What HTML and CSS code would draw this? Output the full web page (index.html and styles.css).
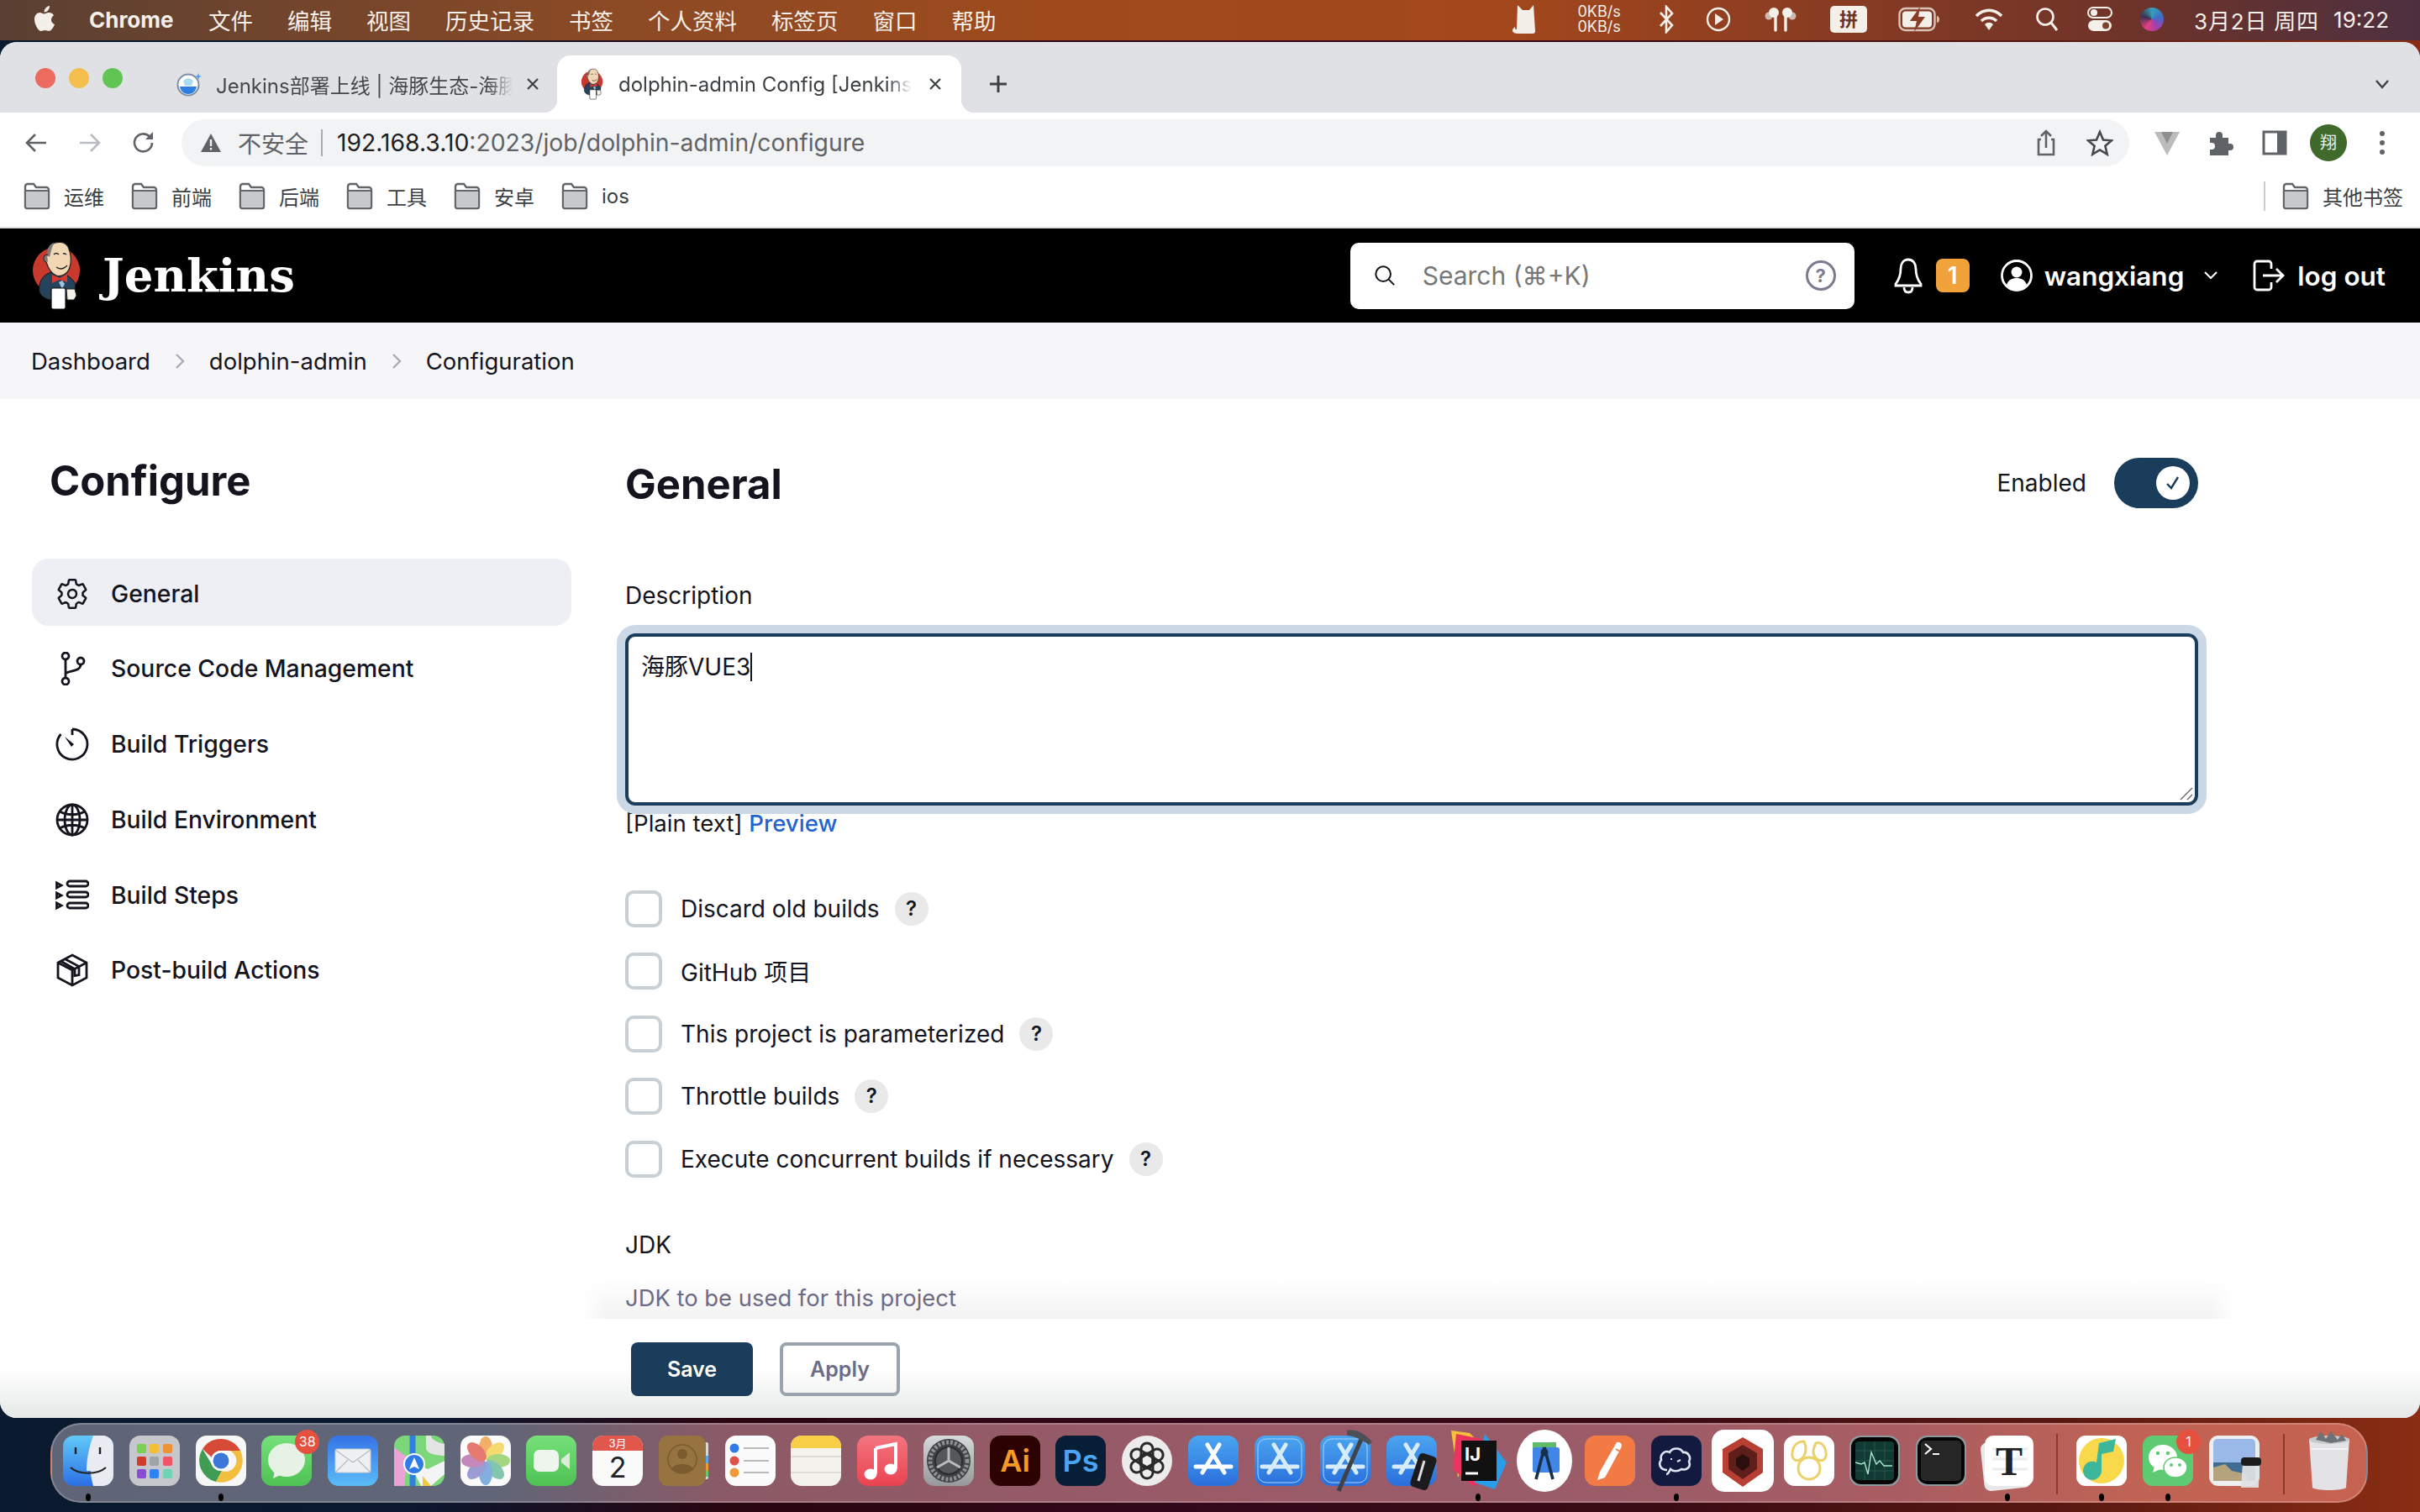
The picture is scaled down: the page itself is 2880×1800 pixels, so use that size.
FILE: index.html
```html
<!DOCTYPE html>
<html lang="zh-CN">
<head>
    <meta charset="UTF-8">
    <title>dolphin-admin Config [Jenkins]</title>
    <link rel="stylesheet" href="styles.css">
</head>
<body>
    <!-- shared bits -->
    <svg class="defs" width="0" height="0">
        <defs>
            <symbol id="jenkins" viewBox="0 0 62 84">
                <circle cx="30" cy="36" r="28" fill="#c93a2e"/>
                <path d="M10 62C8 48 16 38 28 38c12 0 20 6 25 14l-2 18H40c-12 3-25 2-30-8z" fill="#27435c" stroke="#111" stroke-width="1"/>
                <path d="M22 8C26 1 40 0 44 8c4 8 4 18 2 24-2 8-10 12-16 10-6-2-10-10-12-16-4-2-4-10 2-8z" fill="#f2d7b5" stroke="#222" stroke-width="1.2"/>
                <path d="M20 18c-2-8 2-14 8-15-4 5-4 11-6 17zM16 24c-1-3 0-6 3-6l1 8z" fill="#7b7b7b"/>
                <path d="M27 17c2-2 4-2 6 0M38 16c2-1 3 0 4 1M30 32c4 3 9 2 13-2" fill="none" stroke="#222" stroke-width="1.4"/>
                <path d="M25 41l9 4 9-5v10l-9-3-9 4z" fill="#d8382e"/>
                <path d="M33 50l4-2 3 4-3 6z" fill="#9fc3dd"/>
                <rect x="24" y="57" width="17" height="25" rx="2" fill="#fff" stroke="#111" stroke-width="1.2"/>
                <path d="M42 58h10l2 8-3 5h-8z" fill="#f4f1ea" stroke="#222"/>
            </symbol>
            <symbol id="folder" viewBox="0 0 32 34">
                <path d="M2 6a3 3 0 0 1 3-3h7l3 4h12a3 3 0 0 1 3 3v20a2 2 0 0 1-2 2H4a2 2 0 0 1-2-2z" fill="#fff" stroke="#62656a" stroke-width="2.4"/>
                <path d="M3 12h26v18H3z" fill="#c8c9cb"/>
                <path d="M2 11h28" stroke="#62656a" stroke-width="2"/>
            </symbol>
            <symbol id="close" viewBox="0 0 16 16">
                <path d="M2 2l12 12M14 2L2 14" stroke="#3c4043" stroke-width="2.2" fill="none"/>
            </symbol>
            <symbol id="store-a" viewBox="0 0 60 60">
                <path d="M23 11l20 33M37 11L17 44M9 37h42" fill="none" stroke="currentColor" stroke-width="5" stroke-linecap="round"/>
            </symbol>
            <linearGradient id="g-blue" x1="0" y1="0" x2="0" y2="1"><stop offset="0" stop-color="#4aa5f0"/><stop offset="1" stop-color="#2a6fdc"/></linearGradient>
            <linearGradient id="g-green" x1="0" y1="0" x2="0" y2="1"><stop offset="0" stop-color="#76e07a"/><stop offset="1" stop-color="#4fc254"/></linearGradient>
            <linearGradient id="g-mail" x1="0" y1="0" x2="0" y2="1"><stop offset="0" stop-color="#3573e6"/><stop offset="1" stop-color="#5bbcf8"/></linearGradient>
            <linearGradient id="g-red" x1="0" y1="0" x2="0" y2="1"><stop offset="0" stop-color="#f2757f"/><stop offset="1" stop-color="#ea4350"/></linearGradient>
            <linearGradient id="g-gray" x1="0" y1="0" x2="0" y2="1"><stop offset="0" stop-color="#d6dadb"/><stop offset="1" stop-color="#96989a"/></linearGradient>
            <linearGradient id="g-finder" x1="0" y1="0" x2="0" y2="1"><stop offset="0" stop-color="#62c9f8"/><stop offset="1" stop-color="#2b70e6"/></linearGradient>
        </defs>
    </svg>

    <header class="menubar">
        <svg class="apple" viewBox="0 0 26 32"><path d="M21 17c0-4 3-5.500 3-6-2-3-5-3-6-3-2.500 0-4 1.500-5.500 1.500S9.500 8 7.500 8C4 8 1 11 1 16c0 6 4.500 14 8 14 1.500 0 2.500-1 4.500-1s3 1 4.500 1c3 0 6-5 7-8-2-1-4-2.500-4-5zM17 5.500C18.500 4 19 2 19 0c-2 .2-4 1.500-5 3-1 1-1.500 3-1.500 4.500 2 0 3.500-1 4.500-2z" fill="#f5efe9"/></svg>
        <span class="app-name">Chrome</span>
        <nav class="menu-list">
            <span>文件</span><span>编辑</span><span>视图</span><span>历史记录</span><span>书签</span><span>个人资料</span><span>标签页</span><span>窗口</span><span>帮助</span>
        </nav>
        <div class="status">
            <svg class="st-cat" viewBox="0 0 34 36"><path d="M7 1l6 6h8l5-6 2 31c0 2-1 3-3 3H8c-4 0-7-1-7-4 0-2 2-3 3-4 0 3 1 3 2 3z" fill="#f5efe9"/></svg>
            <span class="net">0KB/s<br>0KB/s</span>
            <svg class="st-icon" width="20" height="34" viewBox="0 0 20 34"><path d="M3 9l14 15-7 8V2l7 8L3 25" fill="none" stroke="#f5efe9" stroke-width="2.600"/></svg>
            <svg class="st-icon" width="30" height="30" viewBox="0 0 30 30"><circle cx="15" cy="15" r="13" fill="none" stroke="#f5efe9" stroke-width="2.400"/><path d="M11 8l10 7-10 7z" fill="#f5efe9"/></svg>
            <svg class="st-icon" width="40" height="30" viewBox="0 0 40 30"><circle cx="6" cy="11" r="4.500" fill="#cdb9ae"/><circle cx="34" cy="11" r="4.500" fill="#cdb9ae"/><path d="M14 8v20M26 8v20" stroke="#f5efe9" stroke-width="3.400" stroke-linecap="round"/><circle cx="12" cy="7" r="6" fill="#f5efe9"/><circle cx="28" cy="7" r="6" fill="#f5efe9"/></svg>
            <span class="st-pin">拼</span>
            <svg class="st-icon" width="50" height="30" viewBox="0 0 50 30"><rect x="1.500" y="2" width="42" height="26" rx="7" fill="none" stroke="#d9c3b9" stroke-width="2.400"/><rect x="5" y="5.500" width="35" height="19" rx="4" fill="#f5efe9"/><path d="M26 0L14 17h8l-3 13 13-18h-8z" fill="#8a3d26"/><path d="M46 11v8c2 0 3-2 3-4s-1-4-3-4z" fill="#d9c3b9"/></svg>
            <svg class="st-icon" width="36" height="30" viewBox="0 0 36 30"><path d="M3 11c9-9 21-9 30 0M9 17c5-5 13-5 18 0" fill="none" stroke="#f5efe9" stroke-width="3.600"/><path d="M13 21c3-3 7-3 10 0l-5 7z" fill="#f5efe9"/></svg>
            <svg class="st-icon" width="28" height="30" viewBox="0 0 28 30"><circle cx="12" cy="12" r="9.500" fill="none" stroke="#f5efe9" stroke-width="2.600"/><path d="M19 19l7 9" stroke="#f5efe9" stroke-width="3"/></svg>
            <svg class="st-icon" width="30" height="30" viewBox="0 0 30 30"><rect x="1" y="1" width="28" height="12" rx="6" fill="none" stroke="#f5efe9" stroke-width="2"/><circle cx="8" cy="7" r="4" fill="#f5efe9"/><rect x="1" y="16" width="28" height="13" rx="6.500" fill="#f5efe9"/><circle cx="22" cy="22.500" r="4" fill="#7b4230"/></svg>
            <span class="st-siri"></span>
            <span class="clock">3月2日 周四</span>
            <span class="clock clock-time">19:22</span>
        </div>
    </header>

    <div class="window">
        <div class="tabstrip">
            <div class="lights"><i class="red"></i><i class="yellow"></i><i class="green"></i></div>
            <div class="tab">
                <svg class="favicon" viewBox="0 0 30 30"><circle cx="14" cy="16" r="12.500" fill="#fff" stroke="#7d8ea8" stroke-width="2"/><path d="M4 18h20c-1 6-5 9-10 9S5 24 4 18z" fill="#2f7fe0"/><path d="M8 12c2-5 10-5 12 0l-2 5H10z" fill="#a9dcf1"/><path d="M26 2l1 3 3 1-3 1-1 3-1-3-3-1 3-1z" fill="#4f9cf0"/></svg>
                <span class="tab-title">Jenkins部署上线 | 海豚生态-海豚生态官方文档</span>
                <svg class="tab-close"><use href="#close"/></svg>
            </div>
            <div class="tab active">
                <svg class="favicon"><use href="#jenkins"/></svg>
                <span class="tab-title">dolphin-admin Config [Jenkins]</span>
                <svg class="tab-close"><use href="#close"/></svg>
            </div>
            <svg class="tab-plus" viewBox="0 0 22 22"><path d="M11 1v20M1 11h20" stroke="#3c4043" stroke-width="3"/></svg>
            <svg class="tab-more" viewBox="0 0 18 12"><path d="M2 2l7 8 7-8" fill="none" stroke="#3c4043" stroke-width="2.400"/></svg>
        </div>

        <div class="toolbar">
            <svg class="nav-btn" viewBox="0 0 28 28"><path d="M26 14H4M13 4L3 14l10 10" fill="none" stroke="#5f6368" stroke-width="2.600"/></svg>
            <svg class="nav-btn" viewBox="0 0 28 28"><path d="M2 14h22M15 4l10 10-10 10" fill="none" stroke="#b9bcc0" stroke-width="2.600"/></svg>
            <svg class="nav-btn" viewBox="0 0 28 28"><path d="M24 14a10.500 10.500 0 1 1-3-7.500" fill="none" stroke="#5f6368" stroke-width="2.600"/><path d="M25 1v9h-9z" fill="#5f6368"/></svg>
            <div class="omnibox">
                <svg class="warn" viewBox="0 0 26 26"><path d="M13 2l12 22H1z" fill="#5f6368"/><path d="M13 9v8M13 19v2.500" stroke="#f1f3f4" stroke-width="2.400"/></svg>
                <span class="insecure">不安全</span>
                <span class="omni-sep"></span>
                <span class="url"><b>192.168.3.10</b>:2023/job/dolphin-admin/configure</span>
                <div class="omni-actions">
                    <svg viewBox="0 0 32 32"><path d="M10 12H7v18h18V12h-3M16 22V3M10 8l6-6 6 6" fill="none" stroke="#5f6368" stroke-width="2.600"/></svg>
                    <svg viewBox="0 0 32 32"><path d="M16 3l4 9.500 10 .8-7.600 6.500 2.300 9.900L16 24.500l-8.700 5.200 2.300-9.900L2 13.300l10-.8z" fill="none" stroke="#45484c" stroke-width="2.600"/></svg>
                </div>
            </div>
            <div class="extensions">
                <svg viewBox="0 0 32 32"><path d="M1 3h30L16 31z" fill="#bcbcbc"/><path d="M9 3h14l-7 14z" fill="#8f8f8f"/></svg>
                <svg viewBox="0 0 32 32"><path d="M3 10h7V7a4 4 0 0 1 8 0v3h7v7h2a4 4 0 0 1 0 8h-2v6H3v-7h2a4 4 0 0 0 0-8H3z" fill="#5f6368"/></svg>
                <svg viewBox="0 0 32 32"><rect x="3" y="3" width="26" height="26" fill="none" stroke="#5f6368" stroke-width="3"/><rect x="19" y="3" width="10" height="26" fill="#5f6368"/></svg>
                <span class="avatar">翔</span>
                <svg viewBox="0 0 32 32"><circle cx="16" cy="5" r="3" fill="#5f6368"/><circle cx="16" cy="16" r="3" fill="#5f6368"/><circle cx="16" cy="27" r="3" fill="#5f6368"/></svg>
            </div>
        </div>

        <div class="bookmarks">
            <a class="bookmark"><svg><use href="#folder"/></svg>运维</a>
            <a class="bookmark"><svg><use href="#folder"/></svg>前端</a>
            <a class="bookmark"><svg><use href="#folder"/></svg>后端</a>
            <a class="bookmark"><svg><use href="#folder"/></svg>工具</a>
            <a class="bookmark"><svg><use href="#folder"/></svg>安卓</a>
            <a class="bookmark"><svg><use href="#folder"/></svg>ios</a>
            <div class="other-bookmarks"><a class="bookmark"><svg><use href="#folder"/></svg>其他书签</a></div>
        </div>

        <header class="jenkins-header">
            <svg class="logo"><use href="#jenkins"/></svg>
            <span class="wordmark">Jenkins</span>
            <div class="search">
                <svg class="search-icon" viewBox="0 0 28 28"><circle cx="12" cy="12" r="9.500" fill="none" stroke="#14141f" stroke-width="2.200"/><path d="M19 19l7 7" stroke="#14141f" stroke-width="2.200"/></svg>
                <span class="search-text">Search (⌘+K)</span>
                <span class="search-help">?</span>
            </div>
            <svg class="bell" viewBox="0 0 36 44"><path d="M18 3c-6 0-9 5-9 11 0 8-2 13-6 18v2h30v-2c-4-5-6-10-6-18 0-6-3-11-9-11z" fill="none" stroke="#fff" stroke-width="2.800"/><path d="M13 36c0 4 2 6 5 6s5-2 5-6" fill="none" stroke="#fff" stroke-width="2.800"/></svg>
            <span class="badge">1</span>
            <svg class="user-icon" viewBox="0 0 38 38"><circle cx="19" cy="19" r="17.500" fill="none" stroke="#fff" stroke-width="2.800"/><circle cx="19" cy="15" r="6.500" fill="#fff"/><path d="M7 30c2-6 7-8 12-8s10 2 12 8c-3 4-7 6-12 6s-9-2-12-6z" fill="#fff"/></svg>
            <span class="user-name">wangxiang</span>
            <svg class="user-caret" viewBox="0 0 16 10"><path d="M1 1l7 7 7-7" fill="none" stroke="#fff" stroke-width="2.200"/></svg>
            <svg class="logout-icon" viewBox="0 0 38 38"><path d="M22 11V5a3 3 0 0 0-3-3H5a3 3 0 0 0-3 3v28a3 3 0 0 0 3 3h14a3 3 0 0 0 3-3v-6M12 19h24M28 11l8 8-8 8" fill="none" stroke="#fff" stroke-width="2.800"/></svg>
            <span class="logout">log out</span>
        </header>

        <nav class="breadcrumbs">
            <a>Dashboard</a>
            <svg viewBox="0 0 12 20"><path d="M2 2l8 8-8 8" fill="none" stroke="#a9a9b8" stroke-width="2.400"/></svg>
            <a>dolphin-admin</a>
            <svg viewBox="0 0 12 20"><path d="M2 2l8 8-8 8" fill="none" stroke="#a9a9b8" stroke-width="2.400"/></svg>
            <a>Configuration</a>
        </nav>

        <div class="config">
            <aside class="sidebar">
                <h1>Configure</h1>
                <ul class="side-nav">
                    <li class="selected">
                        <svg viewBox="0 0 512 512"><path class="line-big" d="M262.290 192.310a64 64 0 1 0 57.400 57.400 64.130 64.130 0 0 0-57.400-57.400zM416.390 256a154.340 154.340 0 0 1-1.530 20.790l45.210 35.460a10.810 10.810 0 0 1 2.450 13.750l-42.770 74a10.810 10.810 0 0 1-13.140 4.590l-44.900-18.080a16.110 16.110 0 0 0-15.170 1.750A164.480 164.480 0 0 1 325 400.800a15.940 15.940 0 0 0-8.820 12.140l-6.730 47.890a11.080 11.080 0 0 1-10.680 9.170h-85.540a11.110 11.110 0 0 1-10.690-8.870l-6.720-47.820a16.070 16.070 0 0 0-9-12.220 155.300 155.300 0 0 1-21.460-12.570 16 16 0 0 0-15.110-1.710l-44.890 18.070a10.810 10.810 0 0 1-13.140-4.580l-42.770-74a10.800 10.800 0 0 1 2.450-13.750l38.210-30a16.050 16.050 0 0 0 6-14.080c-.36-4.170-.58-8.330-.58-12.500s.21-8.270.58-12.350a16 16 0 0 0-6.070-13.940l-38.190-30A10.810 10.810 0 0 1 49.480 186l42.770-74a10.810 10.810 0 0 1 13.140-4.590l44.900 18.080a16.110 16.110 0 0 0 15.170-1.750A164.480 164.480 0 0 1 187 111.200a15.940 15.940 0 0 0 8.820-12.140l6.730-47.890A11.080 11.080 0 0 1 213.230 42h85.540a11.110 11.110 0 0 1 10.690 8.870l6.720 47.820a16.070 16.070 0 0 0 9 12.220 155.300 155.300 0 0 1 21.460 12.570 16 16 0 0 0 15.110 1.710l44.890-18.070a10.810 10.810 0 0 1 13.140 4.580l42.770 74a10.800 10.800 0 0 1-2.450 13.750l-38.210 30a16.050 16.050 0 0 0-6.050 14.080c.33 4.140.55 8.300.55 12.470z"/></svg>
                        General
                    </li>
                    <li>
                        <svg viewBox="0 0 40 40"><g class="line"><circle cx="12" cy="5" r="4"/><circle cx="30" cy="11" r="4"/><circle cx="12" cy="35" r="4"/><path d="M12 9v22M12 26c3-4 18-2 18-11"/></g></svg>
                        Source Code Management
                    </li>
                    <li>
                        <svg viewBox="0 0 40 40"><g class="line"><path d="M20 2a18 18 0 1 1-13.500 6M20 2v7"/></g><path d="M11 11l11 9-3 3z" class="solid"/></svg>
                        Build Triggers
                    </li>
                    <li>
                        <svg viewBox="0 0 40 40"><g class="line"><circle cx="20" cy="20" r="18"/><ellipse cx="20" cy="20" rx="9" ry="18"/><path d="M20 2v36M2 20h36M5 10c9 5 21 5 30 0M5 30c9-5 21-5 30 0"/></g></svg>
                        Build Environment
                    </li>
                    <li>
                        <svg viewBox="0 0 40 40"><g class="line"><path d="M1.500 5l5.500 3-5.500 3zM1.500 17l5.500 3-5.500 3zM1.500 29l5.500 3-5.500 3z"/><rect x="14" y="3" width="25" height="6" rx="3"/><rect x="14" y="16" width="25" height="6" rx="3"/><rect x="14" y="29" width="25" height="6" rx="3"/></g></svg>
                        Build Steps
                    </li>
                    <li>
                        <svg viewBox="0 0 40 40"><g class="line"><path d="M20 2l17 9v18l-17 9-17-9V11zM3 11l17 9 17-9M20 20v18M11 6.500l17 9v10l-5 1v-8L6 9"/></g></svg>
                        Post-build Actions
                    </li>
                </ul>
            </aside>

            <main class="main">
                <div class="main-body">
                    <div class="section-head">
                        <h2>General</h2>
                        <div class="enabled">
                            <span>Enabled</span>
                            <span class="toggle">
                                <span class="knob"><svg viewBox="0 0 20 20"><path d="M3 11l5 5L16 3" fill="none" stroke="#1b3d5c" stroke-width="2.400"/></svg></span>
                            </span>
                        </div>
                    </div>

                    <div class="field-label desc-label">Description</div>
                    <div class="desc-box">
                        <span>海豚VUE3</span><i class="caret"></i>
                        <svg class="grip" viewBox="0 0 16 16"><path d="M1 15L15 1M9 15l6-6" stroke="#666" stroke-width="1.400"/></svg>
                    </div>
                    <div class="desc-foot">[Plain text] <a>Preview</a></div>

                    <div class="checks">
                        <label class="check"><i class="box"></i>Discard old builds<span class="help">?</span></label>
                        <label class="check"><i class="box"></i>GitHub 项目</label>
                        <label class="check"><i class="box"></i>This project is parameterized<span class="help">?</span></label>
                        <label class="check"><i class="box"></i>Throttle builds<span class="help">?</span></label>
                        <label class="check"><i class="box"></i>Execute concurrent builds if necessary<span class="help">?</span></label>
                    </div>

                    <div class="field-label jdk-label">JDK</div>
                    <div class="jdk-desc">JDK to be used for this project</div>
                </div>

                <div class="bottom-bar">
                    <button class="btn-save">Save</button>
                    <button class="btn-apply">Apply</button>
                </div>
            </main>
        </div>
    </div>

    <footer class="dock">
        <div class="dock-item on"><svg viewBox="0 0 60 60"><rect width="60" height="60" rx="13" fill="url(#g-finder)"/><path d="M36 0h11a13 13 0 0 1 13 13v34a13 13 0 0 1-13 13H36c-2-8-3-12-3-18h-5c0-14 3-28 8-42z" fill="#e9edf3"/><path d="M15 14v8M44 14v8" stroke="#222" stroke-width="2.400"/><path d="M9 38c10 9 32 9 42 0" fill="none" stroke="#222" stroke-width="2"/></svg></div>
        <div class="dock-item"><svg viewBox="0 0 60 60"><rect width="60" height="60" rx="13" fill="#c5c7cc"/><rect x="9" y="10" width="11" height="11" rx="2" fill="#7bd14f"/><rect x="24" y="10" width="11" height="11" rx="2" fill="#f4bf36"/><rect x="40" y="10" width="11" height="11" rx="2" fill="#ec9433"/><rect x="9" y="25" width="11" height="11" rx="2" fill="#d23b2c"/><rect x="24" y="25" width="11" height="11" rx="2" fill="#9fa4a8"/><rect x="40" y="25" width="11" height="11" rx="2" fill="#ef5565"/><rect x="9" y="40" width="11" height="11" rx="2" fill="#8a4bd4"/><rect x="24" y="40" width="11" height="11" rx="2" fill="#2f83f0"/><rect x="40" y="40" width="11" height="11" rx="2" fill="#6fd4b4"/></svg></div>
        <div class="dock-item on"><svg viewBox="0 0 60 60"><rect width="60" height="60" rx="13" fill="#f7f7f7"/><path d="M30 4a26 26 0 0 1 23 14H30a12 12 0 0 0-11 8L8 16A26 26 0 0 1 30 4z" fill="#d84a38"/><path d="M8 16l12 20a12 12 0 0 0 11 6L24 55A26 26 0 0 1 8 16z" fill="#3f9c52"/><path d="M53 18a26 26 0 0 1-29 37l7-13a12 12 0 0 0 9-24z" fill="#f1bf3d"/><circle cx="30" cy="30" r="12" fill="#fff"/><circle cx="30" cy="30" r="9.500" fill="#3b78d8"/></svg></div>
        <div class="dock-item"><svg viewBox="0 0 60 60"><rect width="60" height="60" rx="13" fill="url(#g-green)"/><ellipse cx="30" cy="29" rx="22" ry="20" fill="#e6f3e4"/><path d="M16 42l-2 9 11-5z" fill="#e6f3e4"/></svg><span class="dock-badge">38</span></div>
        <div class="dock-item"><svg viewBox="0 0 60 60"><rect width="60" height="60" rx="13" fill="url(#g-mail)"/><rect x="9" y="16" width="42" height="28" rx="2" fill="#eef0f2" stroke="#c8ccd2"/><path d="M9 17l21 15 21-15M9 44l15-15M51 44L36 29" fill="none" stroke="#b9bdc4" stroke-width="1.400"/></svg></div>
        <div class="dock-item"><svg viewBox="0 0 60 60"><rect width="60" height="60" rx="13" fill="#7bd77a"/><path d="M0 14l16 12-4 34H0z" fill="#e9a3d6"/><path d="M38 0v14c0 6 6 9 22 10V10C50 8 44 4 44 0z" fill="#e4e4e4"/><path d="M32 60L16 28 40 40l20-10v16L44 60z" fill="#f4f4f4"/><path d="M34 48l10 12H34z" fill="#f2c83c"/><path d="M22 0v60" stroke="#2f7be8" stroke-width="7" opacity=".95"/><circle cx="24" cy="34" r="12" fill="#2f7be8" stroke="#fff" stroke-width="2"/><path d="M24 26l6 14-6-3-6 3z" fill="#fff"/></svg></div>
        <div class="dock-item"><svg viewBox="0 0 60 60"><rect width="60" height="60" rx="13" fill="#fbfbfb"/><g opacity=".78" transform="translate(30 30)"><ellipse cy="-15" rx="8" ry="14" fill="#f09a3e"/><ellipse cy="-15" rx="8" ry="14" fill="#f4d24a" transform="rotate(45)"/><ellipse cy="-15" rx="8" ry="14" fill="#8ccb5e" transform="rotate(90)"/><ellipse cy="-15" rx="8" ry="14" fill="#61b89a" transform="rotate(135)"/><ellipse cy="-15" rx="8" ry="14" fill="#5f9ad8" transform="rotate(180)"/><ellipse cy="-15" rx="8" ry="14" fill="#8083c8" transform="rotate(225)"/><ellipse cy="-15" rx="8" ry="14" fill="#b56aa8" transform="rotate(270)"/><ellipse cy="-15" rx="8" ry="14" fill="#e0574c" transform="rotate(315)"/></g></svg></div>
        <div class="dock-item"><svg viewBox="0 0 60 60"><rect width="60" height="60" rx="13" fill="url(#g-green)"/><rect x="9" y="17" width="30" height="26" rx="7" fill="#eef5ec"/><path d="M42 28l10-8v20l-10-8z" fill="#dcebd8"/></svg></div>
        <div class="dock-item"><svg viewBox="0 0 60 60"><rect width="60" height="60" rx="13" fill="#fafafa"/><path d="M0 18V13A13 13 0 0 1 13 0h34a13 13 0 0 1 13 13v5z" fill="#e2574c"/><text x="30" y="14" class="cal-month">3月</text><text x="30" y="50" class="cal-day">2</text></svg></div>
        <div class="dock-item"><svg viewBox="0 0 60 60"><rect x="50" y="8" width="9" height="44" rx="2" fill="#d8d8d8"/><rect x="54" y="24" width="5" height="9" fill="#58a8e8"/><rect x="54" y="33" width="5" height="9" fill="#ef9a36"/><rect x="54" y="42" width="5" height="7" fill="#67c667"/><rect width="56" height="60" rx="11" fill="#96733f"/><circle cx="28" cy="28" r="17" fill="none" stroke="#7b5c31" stroke-width="1.600"/><circle cx="28" cy="22" r="6" fill="#7b5c31"/><path d="M15 40c3-8 23-8 26 0-6 6-20 6-26 0z" fill="#7b5c31"/></svg></div>
        <div class="dock-item"><svg viewBox="0 0 60 60"><rect width="60" height="60" rx="13" fill="#fbfbfb"/><circle cx="11" cy="15" r="5.500" fill="#2f7be8"/><circle cx="11" cy="30" r="5.500" fill="#e2504c"/><circle cx="11" cy="44" r="5.500" fill="#ef9a36"/><path d="M22 15h30M22 30h30M22 44h30" stroke="#bbb" stroke-width="2"/></svg></div>
        <div class="dock-item"><svg viewBox="0 0 60 60"><rect width="60" height="60" rx="13" fill="#f4f2ec"/><path d="M0 15V13A13 13 0 0 1 13 0h34a13 13 0 0 1 13 13v2z" fill="#f7ce46"/><path d="M0 25h60M0 44h60" stroke="#dddbd5" stroke-width="2"/></svg></div>
        <div class="dock-item"><svg viewBox="0 0 60 60"><rect width="60" height="60" rx="13" fill="url(#g-red)"/><path d="M22 15l24-5v29" fill="none" stroke="#fff" stroke-width="4"/><path d="M22 15v30" stroke="#fff" stroke-width="4"/><ellipse cx="16" cy="46" rx="7.500" ry="6.500" fill="#fff"/><ellipse cx="40" cy="40" rx="7.500" ry="6.500" fill="#fff"/></svg></div>
        <div class="dock-item"><svg viewBox="0 0 60 60"><rect width="60" height="60" rx="13" fill="url(#g-gray)"/><circle cx="30" cy="30" r="26" fill="#3f4143"/><circle cx="30" cy="30" r="22" fill="none" stroke="#8e9092" stroke-width="5" stroke-dasharray="3 2"/><circle cx="30" cy="30" r="16" fill="#55575a" stroke="#2c2c2c" stroke-width="2"/><path d="M30 30V14M30 30l14 8M30 30l-14 8" stroke="#b9bbbd" stroke-width="3"/></svg></div>
        <div class="dock-item"><svg viewBox="0 0 60 60"><rect width="60" height="60" rx="13" fill="#2c0301"/><text x="30" y="43" class="ai-text">Ai</text></svg></div>
        <div class="dock-item"><svg viewBox="0 0 60 60"><rect width="60" height="60" rx="13" fill="#061e36"/><text x="30" y="43" class="ps-text">Ps</text></svg></div>
        <div class="dock-item"><svg viewBox="0 0 60 60"><circle cx="30" cy="30" r="30" fill="#ececec"/><g fill="none" stroke="#2a2a2a" stroke-width="3" transform="translate(30 30)"><rect x="-7" y="-21" width="14" height="30" rx="7"/><rect x="-7" y="-21" width="14" height="30" rx="7" transform="rotate(60)"/><rect x="-7" y="-21" width="14" height="30" rx="7" transform="rotate(120)"/><rect x="-7" y="-21" width="14" height="30" rx="7" transform="rotate(180)"/><rect x="-7" y="-21" width="14" height="30" rx="7" transform="rotate(240)"/><rect x="-7" y="-21" width="14" height="30" rx="7" transform="rotate(300)"/></g></svg></div>
        <div class="dock-item"><svg viewBox="0 0 60 60" class="store-white"><rect width="60" height="60" rx="13" fill="url(#g-blue)"/><use href="#store-a"/></svg></div>
        <div class="dock-item"><svg viewBox="0 0 60 60" class="store-thin"><rect width="60" height="60" rx="13" fill="url(#g-blue)"/><rect x="4" y="4" width="52" height="52" rx="10" fill="none" stroke="#a9d4f7" stroke-width="1"/><use href="#store-a"/></svg></div>
        <div class="dock-item"><svg viewBox="0 0 60 60" class="store-thin"><rect width="60" height="60" rx="13" fill="url(#g-blue)"/><rect x="4" y="4" width="52" height="52" rx="10" fill="none" stroke="#a9d4f7" stroke-width="1"/><use href="#store-a"/><path d="M50 2L22 66" stroke="#3f4247" stroke-width="5"/><path d="M32 -6c12-2 22 4 30 14l-4 3c-8-6-16-10-26-11z" fill="#4d5056"/></svg></div>
        <div class="dock-item"><svg viewBox="0 0 60 60" class="store-thin"><rect width="60" height="60" rx="13" fill="url(#g-blue)"/><use href="#store-a"/><rect x="33" y="22" width="22" height="42" rx="5" fill="#1b1b1d" transform="rotate(18 44 43)"/><path d="M45 30l-7 24" stroke="#ddd" stroke-width="3"/></svg></div>
        <div class="dock-item on"><svg viewBox="0 0 60 60"><path d="M-2-6l22 3 8 8L6 50z" fill="#f6c13b"/><path d="M4-2l30 6 20 46-30 10L0 40z" fill="#e8345f"/><path d="M38-2l26 34-14 32-24-8z" fill="#2b9ce8"/><rect x="10" y="6" width="42" height="48" fill="#111"/><text x="14" y="30" class="ij-text">IJ</text><path d="M15 45h15" stroke="#fff" stroke-width="3"/></svg></div>
        <div class="dock-item"><svg viewBox="0 0 60 60"><ellipse cx="30" cy="30" rx="33" ry="37" fill="#fff"/><path d="M16 8h28v12H16z" fill="#5fba6c"/><rect x="16" y="14" width="32" height="30" rx="3" fill="#4285e8"/><path d="M30 14L20 52M30 14l10 38" fill="none" stroke="#16304d" stroke-width="3.600"/><circle cx="30" cy="20" r="4.500" fill="#16304d"/></svg></div>
        <div class="dock-item"><svg viewBox="0 0 60 60"><rect width="60" height="60" rx="13" fill="#f27a45"/><path d="M38 8c5-1 7 3 5 7L24 50l-9 3 3-10z" fill="#fff"/><path d="M37 16l5 3" stroke="#f27a45" stroke-width="2"/></svg></div>
        <div class="dock-item on"><svg viewBox="0 0 60 60"><rect width="60" height="60" rx="13" fill="#131a3f"/><path d="M19 41c-8 0-11-7-7-12-2-7 5-12 10-9 3-6 13-6 16 0 6-1 10 6 7 11 3 6-3 11-9 9-4 3-10 3-13 0-2 4-3 6-5 6" fill="none" stroke="#dfe4f4" stroke-width="2.600"/><path d="M24 27v2M35 29l-4 2" stroke="#dfe4f4" stroke-width="2"/></svg></div>
        <div class="dock-item"><svg class="icon-large" viewBox="0 0 74 74"><rect width="74" height="74" rx="15" fill="#fff"/><path d="M37 9l24 14v28L37 68 13 51V23z" fill="#b83f33"/><path d="M37 18l17 10v19L37 59 20 47V28z" fill="#5f1e1c"/><path d="M37 29l8 5v9l-8 6-8-6v-9z" fill="#2b0e0d"/></svg></div>
        <div class="dock-item"><svg viewBox="0 0 60 60"><rect width="60" height="60" rx="13" fill="#fff"/><g fill="none" stroke="#ecd06a" stroke-width="3"><circle cx="30" cy="39" r="13"/><path d="M22 27C13 34 9 26 10 20 11 12 16 7 24 7c3 6 3 14-2 20zM38 27c9 7 13-1 12-7C49 12 44 7 38 9c-3 6-5 12 0 18z"/></g></svg></div>
        <div class="dock-item"><svg viewBox="0 0 60 60"><rect width="60" height="60" rx="13" fill="#8c9aa0"/><rect x="2" y="2" width="56" height="56" rx="12" fill="#050505"/><rect x="7" y="7" width="46" height="46" rx="4" fill="#123a34"/><path d="M7 18h46M7 30h46M7 42h46M18 7v46M30 7v46M42 7v46" stroke="#2f5d54" stroke-width=".8"/><path d="M7 32l7 2 4-2 4 14 4-26 6 14 4-4 5 6h10" fill="none" stroke="#a8e8cf" stroke-width="1.400"/></svg></div>
        <div class="dock-item"><svg viewBox="0 0 60 60"><rect width="60" height="60" rx="13" fill="#8c9aa0"/><rect x="2" y="2" width="56" height="56" rx="12" fill="#050505"/><rect x="6" y="6" width="48" height="48" rx="5" fill="#262626"/><path d="M11 10l7 6-7 6M20 22h8" fill="none" stroke="#fff" stroke-width="2.200"/></svg></div>
        <div class="dock-item on"><svg viewBox="0 0 60 60"><rect x="0" y="6" width="56" height="58" rx="8" fill="#e8e8e8" transform="rotate(-6 28 34)"/><rect x="3" y="0" width="58" height="60" rx="10" fill="#fff"/><path d="M12 16h42M12 28h42M12 40h42" stroke="#ececec" stroke-width="3"/><text x="32" y="47" class="typora-text">T</text></svg></div>
        <span class="dock-sep dock-sep-a"></span>
        <div class="dock-item on"><svg viewBox="0 0 60 60"><rect width="60" height="60" rx="11" fill="#fff"/><ellipse cx="30" cy="30" rx="27" ry="27" fill="#f8d94c"/><path d="M27 9l20-5-3 15-14 3v20a11 11 0 1 1-6-10z" fill="#3db79b"/></svg></div>
        <div class="dock-item on"><svg viewBox="0 0 60 60"><rect width="60" height="60" rx="12" fill="#5ecb73"/><ellipse cx="24" cy="26" rx="17" ry="15" fill="#fff"/><path d="M14 37l-2 7 9-4z" fill="#fff"/><ellipse cx="39" cy="38" rx="14" ry="12" fill="#fff" stroke="#5ecb73" stroke-width="1.600"/><circle cx="18" cy="21" r="2.200" fill="#5ecb73"/><circle cx="30" cy="21" r="2.200" fill="#5ecb73"/><circle cx="34" cy="35" r="2" fill="#5ecb73"/><circle cx="44" cy="35" r="2" fill="#5ecb73"/></svg><span class="dock-badge">1</span></div>
        <div class="dock-item"><svg viewBox="0 0 60 60"><rect width="60" height="60" rx="11" fill="#eceef0"/><rect x="5" y="4" width="50" height="50" rx="5" fill="#9ab8e8"/><path d="M5 32h50v22H5z" fill="#3f6c90"/><path d="M5 38l14-4 8 8 18 4v8H5z" fill="#b4a37d"/><path d="M40 32h20l-1 30H38z" fill="#dfe3e5" opacity=".92"/><rect x="38" y="26" width="24" height="10" rx="4" fill="#1c1c1c"/></svg></div>
        <span class="dock-sep dock-sep-b"></span>
        <div class="dock-item"><svg viewBox="0 0 60 60" class="icon-trash"><path d="M6 4h48l-4 58c-4 4-36 4-40 0z" fill="#e3e3e5"/><ellipse cx="30" cy="5" rx="24" ry="5" fill="#c9c9cc"/><path d="M14 5l6-10 6 9 6-9 8 10 5-7 5 8-18 3z" fill="#6d7279"/><path d="M8 16h44" stroke="#f5f5f5" stroke-width="2"/></svg></div>
    </footer>
</body>
</html>
```

FILE: styles.css
```css
* {
    box-sizing: border-box;
}
html, body {
    margin: 0;
    height: 1800px;
    overflow: hidden;
}
body {
    font-family: Inter, "Noto Sans CJK SC", sans-serif;
    font-size: 28px;
    color: #14141f;
    background: linear-gradient(90deg, #0a1a2e 0, #0b1830 17%, #2a0611 30%, #33081a 50%, #3a0b14 68%, #571811 85%, #8a2d14 100%);
}
svg {
    display: block;
    flex: none;
}
.defs {
    position: absolute;
}

/* mac menu bar */
.menubar {
    height: 48px;
    display: flex;
    align-items: center;
    padding: 0 0 2px 40px;
    color: #f5efe9;
    font-size: 26.500px;
    background: linear-gradient(90deg, #5a4033 0, #8b4a25 25%, #a04a1c 45%, #a3481c 62%, #8a3c22 75%, #6e3329 88%, #4d3040 100%);
}
.apple {
    width: 26px;
    height: 32px;
}
.app-name {
    margin: 0 41px 0 40px;
    width: 101px;
    font-size: 26px;
    font-weight: 700;
}
.menu-list {
    display: flex;
    gap: 41px;
}
.status {
    margin-left: auto;
    display: grid;
    grid-template-columns: 86px 88px 72px 52px 96px 66px 102px 64px 74px 52px 72px auto auto;
    align-items: center;
    justify-items: center;
    padding-right: 37px;
    font-size: 26px;
}
.st-cat {
    width: 34px;
    height: 36px;
}
.net {
    font-size: 18px;
    line-height: 18px;
    text-align: center;
}
.st-pin {
    width: 44px;
    height: 32px;
    border-radius: 5px;
    background: #f5efe9;
    color: #6e3324;
    font-size: 22px;
    font-weight: 700;
    line-height: 32px;
    text-align: center;
}
.st-siri {
    width: 28px;
    height: 28px;
    border-radius: 50%;
    background: conic-gradient(#35a0b8, #3f6ec8, #a03fb0, #e04080, #3c3050, #35a0b8);
}
.clock {
    margin-left: 14px;
    width: 154px;
    letter-spacing: .8px;
    white-space: nowrap;
}
.clock-time {
    width: auto;
    margin-left: 12px;
    letter-spacing: 0;
}

/* browser window */
.window {
    margin-top: 2px;
    height: 1638px;
    display: flex;
    flex-direction: column;
    background: #fff;
    border-radius: 20px;
    overflow: hidden;
}
.tabstrip {
    height: 84px;
    flex: none;
    display: flex;
    align-items: flex-end;
    padding-right: 36px;
    background: #dfe1e5;
}
.lights {
    width: 184px;
    height: 84px;
    display: flex;
    gap: 16px;
    padding: 31px 0 0 42px;
}
.lights i {
    width: 24px;
    height: 24px;
    border-radius: 50%;
}
.red { background: #ec6a5e; }
.yellow { background: #f4bf4f; }
.green { background: #61c554; }
.tab {
    width: 479px;
    height: 68px;
    display: flex;
    align-items: center;
    padding: 0 21px 0 26px;
    font-size: 24px;
    color: #45474a;
}
.tab.active {
    position: relative;
    width: 481px;
    padding: 0 23px 0 27px;
    background: #fff;
    border-radius: 16px 16px 0 0;
    color: #3c4043;
}
.tab.active::before,
.tab.active::after {
    content: "";
    position: absolute;
    bottom: 0;
    width: 16px;
    height: 16px;
}
.tab.active::before {
    left: -16px;
    background: radial-gradient(circle at 0 0, transparent 16px, #fff 16.500px);
}
.tab.active::after {
    right: -16px;
    background: radial-gradient(circle at 100% 0, transparent 16px, #fff 16.500px);
}
.favicon {
    width: 30px;
    height: 38px;
}
.tab-title {
    flex: 1;
    margin-left: 17px;
    overflow: hidden;
    white-space: nowrap;
    -webkit-mask-image: linear-gradient(90deg, #000 92%, transparent);
    mask-image: linear-gradient(90deg, #000 92%, transparent);
}
.tab-close {
    width: 16px;
    height: 16px;
    margin-left: 16px;
}
.tab.active .tab-title {
    margin-left: 16px;
}
.tab.active .tab-close {
    margin-left: 20px;
}
.tab-plus {
    width: 22px;
    height: 22px;
    margin: 0 0 23px 33px;
}
.tab-more {
    width: 18px;
    height: 12px;
    margin: 0 0 28px auto;
}
.toolbar {
    height: 72px;
    flex: none;
    display: flex;
    align-items: center;
    padding-left: 29px;
}
.nav-btn {
    width: 28px;
    height: 28px;
    margin-right: 36px;
}
.nav-btn:nth-child(3) {
    margin-right: 31px;
}
.omnibox {
    width: 2318px;
    height: 56px;
    display: flex;
    align-items: center;
    padding: 0 19px 0 22px;
    border-radius: 28px;
    background: #f1f3f4;
    color: #5f6368;
}
.warn {
    width: 26px;
    height: 26px;
}
.insecure {
    margin-left: 19px;
}
.omni-sep {
    width: 2px;
    height: 32px;
    margin: 0 17px 0 15px;
    background: #a8abaf;
}
.url {
    font-size: 28.300px;
}
.url b {
    font-weight: 400;
    color: #1f1f1f;
}
.omni-actions {
    margin-left: auto;
    display: flex;
    gap: 32px;
}
.omni-actions svg,
.extensions svg {
    width: 32px;
    height: 32px;
}
.extensions {
    margin-left: 13px;
    display: grid;
    grid-template-columns: repeat(5, 64px);
    justify-items: center;
    align-items: center;
}
.avatar {
    width: 44px;
    height: 44px;
    border-radius: 50%;
    background: #3f6a2b;
    color: #eef3ea;
    font-size: 20px;
    line-height: 44px;
    text-align: center;
}
.bookmarks {
    height: 66px;
    flex: none;
    display: flex;
    align-items: center;
    padding: 0 20px 10px 28px;
    border-bottom: 2px solid #dedede;
    font-size: 24px;
    color: #3c4043;
}
.bookmark {
    width: 128px;
    display: flex;
    align-items: center;
    gap: 16px;
}
.bookmark svg {
    width: 32px;
    height: 34px;
}
.other-bookmarks {
    margin-left: auto;
    padding-left: 20px;
    border-left: 2px solid #ccc;
}
.other-bookmarks .bookmark {
    width: auto;
}

/* jenkins header */
.jenkins-header {
    height: 112px;
    flex: none;
    display: flex;
    align-items: center;
    padding: 0 41px 0 37px;
    background: #000;
    color: #fff;
}
.logo {
    width: 62px;
    height: 84px;
}
.wordmark {
    margin-left: 23px;
    font-family: "DejaVu Serif", serif;
    font-size: 54.500px;
    font-weight: 700;
}
.search {
    margin-left: auto;
    width: 600px;
    height: 79px;
    display: flex;
    align-items: center;
    padding: 0 22px 0 28px;
    border-radius: 10px;
    background: #fff;
    color: #777;
    font-size: 30px;
}
.search-icon {
    width: 26px;
    height: 26px;
}
.search-text {
    margin-left: 32px;
    font-family: Inter, "DejaVu Sans", sans-serif;
}
.search-help {
    margin-left: auto;
    width: 36px;
    height: 36px;
    border: 3px solid #7a7a90;
    border-radius: 50%;
    color: #7a7a90;
    font-size: 22px;
    font-weight: 700;
    line-height: 30px;
    text-align: center;
}
.bell {
    width: 36px;
    height: 44px;
    margin-left: 46px;
}
.badge {
    width: 40px;
    height: 40px;
    margin-left: 15px;
    border-radius: 8px;
    background: #f2a23a;
    font-weight: 600;
    line-height: 40px;
    text-align: center;
}
.user-icon {
    width: 38px;
    height: 38px;
    margin-left: 37px;
}
.user-name {
    margin-left: 14px;
    font-size: 31.500px;
    font-weight: 600;
}
.user-caret {
    width: 16px;
    height: 10px;
    margin-left: 24px;
}
.logout-icon {
    width: 38px;
    height: 38px;
    margin-left: 42px;
}
.logout {
    margin-left: 15px;
    font-size: 31.500px;
    font-weight: 600;
}
.breadcrumbs {
    height: 91px;
    flex: none;
    display: flex;
    align-items: center;
    gap: 29px;
    padding: 0 37px 0;
    font-size: 27.500px;
    background: #f6f6f8;
}
.breadcrumbs svg {
    width: 12px;
    height: 20px;
}

/* config page */
.config {
    flex: 1;
    min-height: 0;
    display: flex;
    background: linear-gradient(#fff calc(100% - 60px), #e6e8e8);
}
.sidebar {
    width: 693px;
    flex: none;
    padding: 68px 0 0 38px;
}
h1 {
    margin: 0 0 62px 21px;
    font-size: 49px;
    line-height: 60px;
    font-weight: 700;
}
.side-nav {
    width: 642px;
    margin: 0;
    padding: 0;
    list-style: none;
    display: flex;
    flex-direction: column;
    gap: 9.800px;
}
.side-nav li {
    height: 80px;
    display: flex;
    align-items: center;
    gap: 26px;
    padding: 3px 0 0 28px;
    border-radius: 20px;
    font-size: 28.300px;
    font-weight: 500;
}
.side-nav li.selected {
    background: #eeeff4;
}
.side-nav svg {
    width: 40px;
    height: 40px;
}
.line {
    fill: none;
    stroke: #14141f;
    stroke-width: 2.800;
}
.line-big {
    fill: none;
    stroke: #14141f;
    stroke-width: 32;
}
.solid {
    fill: #14141f;
}
.main {
    flex: 1;
    min-width: 0;
    display: flex;
    flex-direction: column;
}
.main-body {
    flex: 1;
    min-height: 0;
    overflow: hidden;
    padding: 70px 0 0 51px;
}
.section-head {
    width: 1872px;
    height: 60px;
    display: flex;
    align-items: center;
    justify-content: space-between;
}
h2 {
    margin: 0;
    padding-top: 2px;
    font-size: 49px;
    font-weight: 700;
}
.enabled {
    display: flex;
    align-items: center;
    gap: 33px;
}
.toggle {
    width: 100px;
    height: 60px;
    display: flex;
    align-items: center;
    justify-content: flex-end;
    padding-right: 10px;
    border-radius: 30px;
    background: #1b3d5c;
}
.knob {
    width: 40px;
    height: 40px;
    display: flex;
    align-items: center;
    justify-content: center;
    border-radius: 50%;
    background: #fff;
}
.knob svg {
    width: 20px;
    height: 20px;
}
.field-label {
    line-height: 40px;
}
.desc-label {
    margin-top: 84px;
}
.desc-box {
    position: relative;
    width: 1872px;
    height: 205px;
    margin-top: 25px;
    display: flex;
    align-items: flex-start;
    padding: 19px 15px;
    border: 4px solid #1b3d5c;
    border-radius: 12px;
    box-shadow: 0 0 0 10px #cbd8e5;
    line-height: 34px;
}
.caret {
    width: 2px;
    height: 34px;
    background: #14141f;
}
.grip {
    position: absolute;
    right: 2px;
    bottom: 2px;
    width: 16px;
    height: 16px;
}
.desc-foot {
    margin-top: 1px;
    font-size: 27.600px;
    line-height: 40px;
}
.desc-foot a {
    color: #2563d0;
    font-weight: 500;
}
.checks {
    margin-top: 60px;
    display: flex;
    flex-direction: column;
    gap: 30.400px;
}
.check {
    height: 44px;
    display: flex;
    align-items: center;
}
.box {
    width: 44px;
    height: 44px;
    margin-right: 22px;
    border: 4px solid #c8d0d6;
    border-radius: 10px;
}
.help {
    width: 40px;
    height: 40px;
    margin-left: 18px;
    border-radius: 50%;
    background: #e9e9e9;
    font-size: 24px;
    font-weight: 600;
    line-height: 40px;
    text-align: center;
}
.jdk-label {
    margin-top: 60px;
}
.jdk-desc {
    position: relative;
    z-index: 1;
    margin-top: 23px;
    font-size: 27.400px;
    line-height: 40px;
    color: #6d6b85;
}
.bottom-bar {
    position: relative;
    height: 118px;
    flex: none;
    display: flex;
    gap: 32px;
    padding: 28px 0 0 58px;
}
.bottom-bar::before {
    content: "";
    position: absolute;
    left: 0;
    bottom: 100%;
    width: 1967px;
    height: 50px;
    background: linear-gradient(rgba(241, 241, 241, 0), rgba(241, 241, 241, .9));
    -webkit-mask-image: linear-gradient(90deg, transparent, #000 30px, #000 calc(100% - 30px), transparent);
    mask-image: linear-gradient(90deg, transparent, #000 30px, #000 calc(100% - 30px), transparent);
}
.bottom-bar button {
    width: 145px;
    height: 64px;
    font-family: inherit;
    font-size: 25px;
    font-weight: 600;
    border-radius: 8px;
}
.bottom-bar .btn-apply {
    width: 143px;
}
.btn-save {
    border: none;
    background: #1b3d5c;
    color: #fff;
}
.btn-apply {
    border: 4px solid #9aa4ae;
    background: transparent;
    color: #6d6b85;
}

/* dock */
.dock {
    width: 2758px;
    height: 95px;
    margin: 6px 0 0 60px;
    display: flex;
    align-items: flex-start;
    gap: 18.750px;
    padding: 13px 0 0 13px;
    border: 2px solid rgba(255, 255, 255, .22);
    border-radius: 36px;
    background: linear-gradient(90deg, #5f6576 0, #606577 19%, #8b5a66 29%, #9a5a68 50%, #9b5c68 68%, #a95d62 80%, #c06355 90%, #c66250 100%);
}
.dock-item {
    position: relative;
    width: 60px;
    height: 60px;
    flex: none;
}
.dock-item svg {
    width: 60px;
    height: 60px;
    overflow: visible;
}
.dock-item svg.icon-large {
    width: 74px;
    height: 74px;
    margin: -7px;
}
.dock-item.on::after {
    content: "";
    position: absolute;
    left: 27px;
    top: 69px;
    width: 6px;
    height: 9px;
    border-radius: 50%;
    background: #000;
}
.dock-badge {
    position: absolute;
    top: -7px;
    right: -9px;
    width: 29px;
    height: 29px;
    border-radius: 50%;
    background: #e5503f;
    color: #fff;
    font-size: 16px;
    line-height: 29px;
    text-align: center;
}
.dock-sep {
    width: 2px;
    height: 72px;
    margin-top: -2px;
    background: #8e3a2b;
}
.dock-sep-a {
    margin-left: 9px;
    margin-right: 4px;
}
.dock-sep-b {
    margin-left: 9px;
    margin-right: 5px;
}
.store-white { color: #fff; }
.store-thin { color: #d7ecfb; }
.cal-month {
    font-size: 13px;
    fill: #fff;
    text-anchor: middle;
}
.cal-day {
    font-size: 34px;
    fill: #222;
    text-anchor: middle;
}
.ai-text {
    font-size: 36px;
    font-weight: 600;
    fill: #f59a23;
    text-anchor: middle;
}
.ps-text {
    font-size: 36px;
    font-weight: 600;
    fill: #4aa5f5;
    text-anchor: middle;
}
.ij-text {
    font-size: 22px;
    font-weight: 700;
    fill: #fff;
}
.typora-text {
    font-family: "Liberation Serif", serif;
    font-size: 48px;
    font-weight: 700;
    fill: #222;
    text-anchor: middle;
}
```
